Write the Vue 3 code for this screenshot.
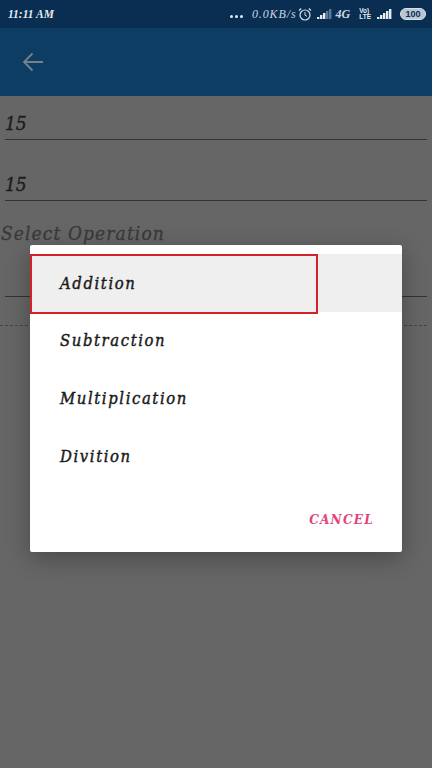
<template>
  <div class="screen">
    <div class="status-bar">
      <span class="time">11:11 AM</span>
      <div class="status-right">
        <span class="dots"><i></i><i></i><i></i></span>
        <span class="speed">0.0KB/s</span>
        <svg class="alarm" width="14" height="15" viewBox="0 0 14 15">
          <circle cx="7" cy="8" r="5" fill="none" stroke="#d5e0ea" stroke-width="1.2" />
          <path d="M7 5v3.2l2 1.2" fill="none" stroke="#d5e0ea" stroke-width="1" />
          <path d="M1 3.5 3.2 1.5M13 3.5 10.8 1.5" stroke="#d5e0ea" stroke-width="1.2" />
        </svg>
        <svg class="signal" width="16" height="12" viewBox="0 0 16 12">
          <rect x="0" y="9" width="2.4" height="2" fill="#e4ebf1" />
          <rect x="3" y="7" width="2.4" height="4" fill="#e4ebf1" />
          <rect x="6" y="5" width="2.4" height="6" fill="#e4ebf1" />
          <rect x="9" y="3" width="2.4" height="8" fill="#5d7a94" />
          <rect x="12" y="1" width="2.4" height="10" fill="#5d7a94" />
        </svg>
        <span class="net">4G</span>
        <span class="net-arrows"></span>
        <span class="volte"><b>Vo)</b><b>LTE</b></span>
        <svg class="signal" width="16" height="12" viewBox="0 0 16 12">
          <rect x="0" y="9" width="2.4" height="2" fill="#e4ebf1" />
          <rect x="3" y="7" width="2.4" height="4" fill="#e4ebf1" />
          <rect x="6" y="5" width="2.4" height="6" fill="#e4ebf1" />
          <rect x="9" y="3" width="2.4" height="8" fill="#e4ebf1" />
          <rect x="12" y="1" width="2.4" height="10" fill="#e4ebf1" />
        </svg>
        <span class="battery">100</span>
      </div>
    </div>

    <div class="app-bar">
      <svg width="22" height="20" viewBox="0 0 22 20">
        <path d="M21 10H2M10.5 1.5 2 10l8.5 8.5" fill="none" stroke="#74828e" stroke-width="1.8" />
      </svg>
    </div>

    <div class="form">
      <div class="field">15</div>
      <div class="field">15</div>
      <div class="label">Select Operation</div>
      <div class="spinner-line"></div>
      <div class="dashed-line"></div>
    </div>

    <div class="dialog">
      <div
        v-for="(op, i) in operations"
        :key="op"
        class="option"
        :class="{ selected: i === 0 }"
      >
        {{ op }}
      </div>
      <div class="actions">
        <span class="cancel">CANCEL</span>
      </div>
      <div class="highlight"></div>
    </div>
  </div>
</template>

<script setup>
const operations = ['Addition', 'Subtraction', 'Multiplication', 'Divition']
</script>

<style>
html,
body {
  margin: 0;
  background: #666;
}
</style>

<style scoped>
.screen {
  position: relative;
  width: 432px;
  height: 768px;
  overflow: hidden;
  background: #666666;
  font-family: "DejaVu Serif Condensed", "Liberation Serif", serif;
  font-style: italic;
}

/* Status bar */
.status-bar {
  height: 28px;
  box-sizing: border-box;
  padding: 0 6px 0 8px;
  display: flex;
  align-items: center;
  justify-content: space-between;
  background: #0a2d52;
  color: #e4ebf1;
}

.time {
  font-family: "Liberation Serif", serif;
  font-size: 11.5px;
  font-weight: bold;
}

.status-right {
  display: flex;
  align-items: center;
}

.dots {
  display: flex;
  gap: 2px;
  margin-top: 4px;
  margin-right: 9px;
}

.dots i {
  width: 3px;
  height: 3px;
  border-radius: 50%;
  background: #e4ebf1;
}

.speed {
  font-family: "Liberation Serif", serif;
  font-size: 12px;
  letter-spacing: 0.9px;
  margin-right: 1px;
  color: #c9d6e2;
}

.alarm {
  margin-right: 5px;
}

.net {
  font-family: "Liberation Serif", serif;
  font-size: 12px;
  font-weight: bold;
  margin-left: 3px;
  color: #c9d6e2;
}

.net-arrows {
  width: 9px;
}

.volte {
  display: flex;
  flex-direction: column;
  font-family: "Liberation Sans", sans-serif;
  font-style: normal;
  font-size: 6.5px;
  line-height: 6.5px;
  margin-right: 6px;
}

.volte b {
  font-weight: bold;
}

.battery {
  margin-left: 7px;
  width: 26px;
  height: 12px;
  box-sizing: border-box;
  border: 1px solid #d5e0ea;
  border-radius: 6px;
  background: #b8c6d3;
  color: #0a2d52;
  font-family: "Liberation Sans", sans-serif;
  font-style: normal;
  font-weight: bold;
  font-size: 9px;
  line-height: 10px;
  text-align: center;
}

/* App bar */
.app-bar {
  height: 68px;
  box-sizing: border-box;
  padding-left: 22px;
  display: flex;
  align-items: center;
  background: #0d3d63;
}

/* Form */
.form {
  padding: 0 5px;
  color: #1c1c1c;
}

.field {
  height: 44px;
  margin-bottom: 17px;
  box-sizing: border-box;
  padding-top: 15px;
  border-bottom: 1px solid #333;
  font-size: 19px;
  line-height: 24px;
  -webkit-text-stroke: 0.35px #1c1c1c;
}

.label {
  margin-left: -4px;
  margin-top: 20px;
  font-size: 19px;
  line-height: 24px;
  letter-spacing: 1.1px;
  color: #3a3a3a;
  -webkit-text-stroke: 0.3px #3a3a3a;
}

.spinner-line {
  margin-top: 51px;
  border-bottom: 1px solid #333;
}

.dashed-line {
  margin-top: 28px;
  margin-left: -5px;
  border-bottom: 1px dashed #444;
}

/* Dialog */
.dialog {
  position: absolute;
  left: 30px;
  top: 245px;
  width: 372px;
  height: 307px;
  box-sizing: border-box;
  padding-top: 9px;
  background: #fff;
  border-radius: 2px;
  box-shadow: 0 6px 24px rgba(0, 0, 0, 0.3);
}

.option {
  height: 57.6px;
  box-sizing: border-box;
  padding-left: 30px;
  padding-top: 1px;
  display: flex;
  align-items: center;
  font-size: 16.5px;
  letter-spacing: 1.6px;
  color: #1a1a1a;
  -webkit-text-stroke: 0.4px #1a1a1a;
}

.option.selected {
  background: #efefef;
}

.actions {
  display: flex;
  justify-content: flex-end;
  padding: 25px 28px 0 0;
}

.cancel {
  font-size: 13.5px;
  font-weight: bold;
  letter-spacing: 1.2px;
  line-height: 20px;
  color: #e0457b;
}

.highlight {
  position: absolute;
  left: 0;
  top: 9px;
  width: 288px;
  height: 60px;
  box-sizing: border-box;
  border: 2px solid #d2232a;
}
</style>
